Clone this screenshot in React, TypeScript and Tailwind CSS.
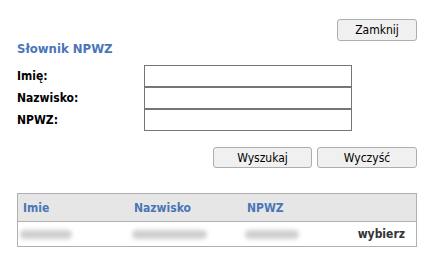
import React from 'react';

const btn =
  'rounded-[3px] border border-[#adadad] bg-[#f0f0f0] text-[12px] leading-none text-black flex items-center justify-center';

function Field({ label }: { label: string }) {
  return (
    <div className="flex h-[22px] items-center">
      <label className="w-[127px] text-[12px] font-bold text-black">{label}</label>
      <input className="h-[22px] w-[208px] border border-[#767676] bg-white outline-none" />
    </div>
  );
}

function Blur({ w }: { w: number }) {
  return <span className="block h-[9px] rounded-full bg-[#cfcfcf] blur-[2px]" style={{ width: w }} />;
}

export default function App() {
  return (
    <div className="h-[263px] w-[434px] bg-white px-[17px] pt-[19px] font-['DejaVu_Sans_Condensed','DejaVu_Sans',sans-serif]">
      <div className="flex justify-end">
        <button className={`${btn} h-[22px] w-[80px]`}>Zamknij</button>
      </div>

      <h1 className="h-[16px] text-[13px] font-bold leading-[16px] text-[#4a76b8]">Słownik NPWZ</h1>

      <div className="mt-[8px] flex flex-col">
        <Field label="Imię:" />
        <Field label="Nazwisko:" />
        <Field label="NPWZ:" />
      </div>

      <div className="mt-[16px] flex justify-end gap-[5px]">
        <button className={`${btn} h-[21px] w-[99px]`}>Wyszukaj</button>
        <button className={`${btn} h-[21px] w-[100px]`}>Wyczyść</button>
      </div>

      <div className="mt-[25px] border border-[#b0b0b0]">
        <div className="grid h-[28px] grid-cols-[111px_113px_1fr] items-center border-b border-[#b0b0b0] bg-[#e6e6e6] pl-[5px] text-[12px] font-bold text-[#4a76b8]">
          <span>Imie</span>
          <span>Nazwisko</span>
          <span>NPWZ</span>
        </div>
        <div className="grid h-[24px] grid-cols-[112px_113px_1fr] items-center pl-[2px] pr-[11px] text-[12px] font-bold text-[#333]">
          <Blur w={52} />
          <Blur w={75} />
          <div className="flex items-center justify-between">
            <Blur w={54} />
            <span>wybierz</span>
          </div>
        </div>
      </div>
    </div>
  );
}
